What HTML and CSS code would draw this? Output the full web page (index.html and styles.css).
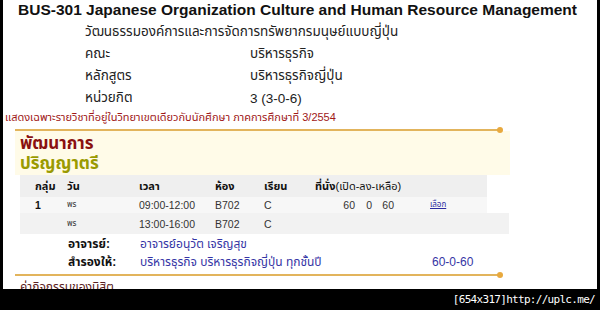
FILE: index.html
```html
<!DOCTYPE html>
<html lang="th">
<head>
<meta charset="utf-8">
<title>BUS-301</title>
<link rel="stylesheet" href="styles.css">
</head>
<body>
<div class="screen">
  <div class="page">
    <h1 class="title">BUS-301 Japanese Organization Culture and Human Resource Management</h1>
    <div class="info">
      <div class="subtitle">วัฒนธรรมองค์การและการจัดการทรัพยากรมนุษย์แบบญี่ปุ่น</div>
      <div class="label">คณะ</div><div class="value">บริหารธุรกิจ</div>
      <div class="label">หลักสูตร</div><div class="value">บริหารธุรกิจญี่ปุ่น</div>
      <div class="label">หน่วยกิต</div><div class="value">3 (3-0-6)</div>
    </div>
    <p class="note">แสดงเฉพาะรายวิชาที่อยู่ในวิทยาเขตเดียวกับนักศึกษา ภาคการศึกษาที่ 3/2554</p>
    <section class="course">
      <div class="rule"></div>
      <div class="course-head">
        <div class="faculty">พัฒนาการ</div>
        <div class="level">ปริญญาตรี</div>
      </div>
      <div class="table">
        <div class="row head">
          <span>กลุ่ม</span><span>วัน</span><span>เวลา</span><span>ห้อง</span><span>เรียน</span><span>ที่นั่ง<span class="thin">(เปิด-ลง-เหลือ)</span></span>
        </div>
        <div class="row first">
          <span class="grp">1</span><span class="day">พร</span><span>09:00-12:00</span><span>B702</span><span>C</span>
          <span class="seats"><span class="s1">60</span><span class="s2">0</span><span class="s3">60</span><a class="pick" href="#">เลือก</a></span>
        </div>
        <div class="row second">
          <span></span><span class="day">พร</span><span>13:00-16:00</span><span>B702</span><span>C</span><span></span>
        </div>
      </div>
      <div class="meta">
        <span class="mlabel">อาจารย์:</span><span class="mvalue">อาจารย์อนุวัต เจริญสุข</span><span></span>
        <span class="mlabel">สำรองให้:</span><span class="mvalue">บริหารธุรกิจ บริหารธุรกิจญี่ปุ่น ทุกชั้นปี</span><span class="mvalue">60-0-60</span>
      </div>
      <div class="rule"></div>
      <div class="next">ค่ากิจกรรมของนิสิต</div>
    </section>
  </div>
  <div class="watermark">[654x317]http://uplc.me/</div>
</div>
</body>
</html>
```
FILE: styles.css
```css
html, body {
  margin: 0;
  padding: 0;
  background: #000;
}
.screen {
  width: 600px;
  height: 310px;
  background: #000;
  overflow: hidden;
}
.page {
  margin-left: 3px;
  width: 594px;
  height: 289px;
  background: #fff;
  overflow: hidden;
  font-family: "Liberation Sans", "Noto Sans Thai", Tahoma, sans-serif;
  color: #1a1a1a;
}
.title {
  margin: 0;
  padding-left: 15px;
  font-size: 15.5px;
  line-height: 20px;
  font-weight: bold;
  color: #111;
  white-space: nowrap;
}
.info {
  display: grid;
  grid-template-columns: 165px auto;
  grid-auto-rows: 22px;
  align-items: center;
  margin-left: 82px;
  margin-top: 1px;
  font-size: 13.5px;
  color: #222;
}
.subtitle {
  grid-column: 1 / 3;
}
.note {
  margin: 0;
  padding-left: 2px;
  font-size: 11px;
  line-height: 16px;
  color: #a01818;
  white-space: nowrap;
}
.course {
  margin-left: 12px;
  width: 495px;
  padding-top: 4px;
}
.rule {
  position: relative;
  width: 485px;
  height: 2px;
  background: #e2b45c;
}
.rule::after {
  content: "";
  position: absolute;
  right: -3px;
  top: -2px;
  width: 6px;
  height: 6px;
  border-radius: 50%;
  background: #e8a93e;
}
.course-head {
  background: #fffbe8;
  padding: 3px 0 1px 5px;
  font-weight: bold;
  font-size: 17px;
  line-height: 20px;
}
.faculty {
  color: #8a1010;
}
.level {
  color: #9a9a00;
}
.table {
  margin-left: 5px;
}
.row {
  display: grid;
  grid-template-columns: 32px 72px 76px 49px 51px auto;
  align-items: center;
  padding-left: 15px;
  font-size: 10.5px;
  color: #333;
  white-space: nowrap;
}
.row.head {
  width: 452px;
  height: 22px;
  background: #efefef;
  font-weight: bold;
  font-size: 11px;
  color: #111;
}
.row.head .thin {
  font-weight: normal;
}
.row.first {
  width: 452px;
  height: 16px;
  background: #f7f7f7;
}
.row.second {
  width: 474px;
  height: 21px;
  background: #f2f2f2;
}
.grp {
  font-weight: bold;
  color: #111;
}
.day {
  font-size: 8px;
}
.seats {
  display: flex;
  align-items: center;
}
.s1 { width: 40px; text-align: right; }
.s2 { width: 17px; text-align: right; }
.s3 { width: 22px; text-align: right; }
.pick {
  margin-left: 36px;
  font-size: 8px;
  color: #2a2aa0;
}
.meta {
  display: grid;
  grid-template-columns: 72px 292px auto;
  grid-auto-rows: 18px;
  align-items: center;
  padding-left: 53px;
  margin-top: 1px;
  font-size: 12px;
  white-space: nowrap;
}
.mlabel {
  font-weight: bold;
  color: #111;
}
.mvalue {
  color: #3535a5;
}
.meta + .rule {
  margin-top: 3px;
}
.next {
  padding-left: 5px;
  padding-top: 3px;
  font-size: 12px;
  line-height: 16px;
  color: #5a2020;
}
.watermark {
  height: 21px;
  padding-right: 5px;
  text-align: right;
  font-family: "DejaVu Sans Mono", monospace;
  font-size: 11px;
  letter-spacing: -0.7px;
  line-height: 21px;
  color: #fff;
}
```
